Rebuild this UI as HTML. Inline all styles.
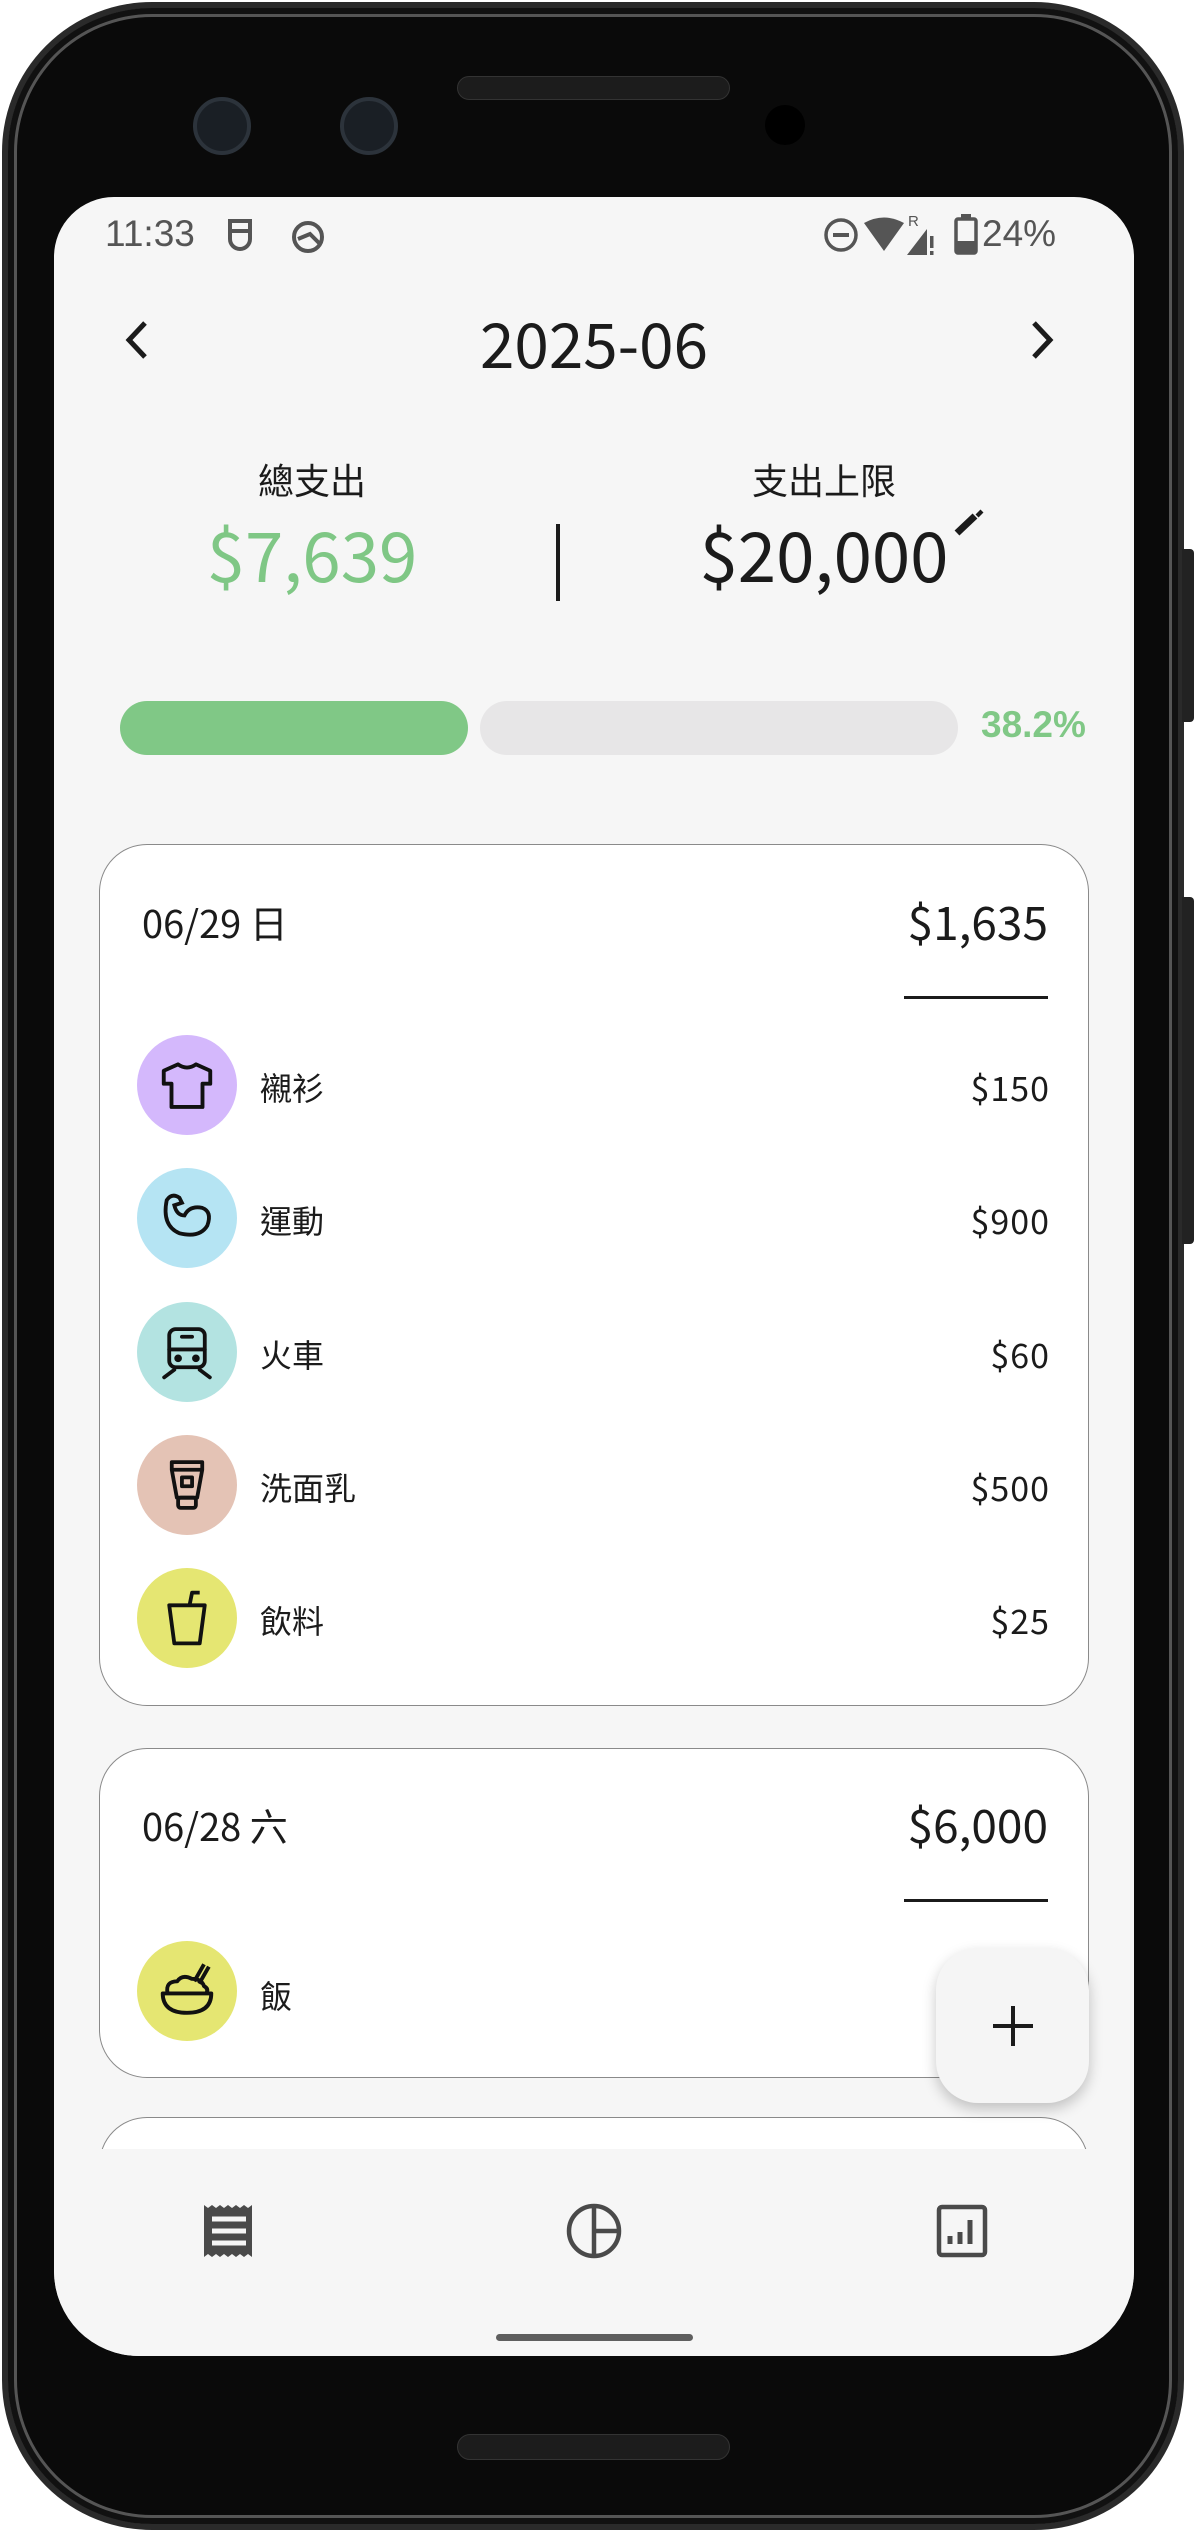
<!DOCTYPE html>
<html><head><meta charset="utf-8"><style>
*{margin:0;padding:0;box-sizing:border-box}
body{width:1194px;height:2532px;background:#fff;position:relative;overflow:hidden;font-family:"Liberation Sans","Noto Sans CJK TC",sans-serif;color:#1b1b1b}
.abs{position:absolute}
.phone{left:2px;top:2px;width:1182px;height:2528px;background:#0a0a0a;border-radius:150px;border:6px solid #2a2a2a;box-shadow:inset 0 0 0 6px #111,inset 0 0 0 9px #555}
.screen{left:54px;top:197px;width:1080px;height:2159px;background:#f6f6f6;border-radius:60px 60px 85px 85px;overflow:hidden}
.sb{font-size:37px;color:#555;top:16px}
.cjk{font-family:"Noto Sans CJK TC",sans-serif}
.card{position:absolute;left:45px;width:990px;background:#fff;border:1.5px solid #8a8a8a;border-radius:48px}
.circ{position:absolute;left:37px;width:100px;height:100px;border-radius:50%;display:flex;align-items:center;justify-content:center}
.lbl{position:absolute;left:160px;font-size:32px;font-family:"Noto Sans CJK TC",sans-serif;line-height:40px}
.amt{position:absolute;right:38px;font-size:34px;font-family:"Noto Sans CJK TC",sans-serif;line-height:40px;letter-spacing:1px}
</style></head><body>
<div class="abs phone"></div>
<div class="abs" style="right:0;top:549px;width:12px;height:173px;background:#222;border-radius:0 4px 4px 0"></div>
<div class="abs" style="right:0;top:897px;width:12px;height:347px;background:#222;border-radius:0 4px 4px 0"></div>
<div class="abs" style="left:457px;top:76px;width:273px;height:24px;border-radius:12px;background:#1c1c1c;border:1px solid #333"></div>
<div class="abs" style="left:193px;top:97px;width:58px;height:58px;border-radius:50%;background:#1a1f25;border:4px solid #2c333b"></div>
<div class="abs" style="left:340px;top:97px;width:58px;height:58px;border-radius:50%;background:#1a1f25;border:4px solid #2c333b"></div>
<div class="abs" style="left:765px;top:105px;width:40px;height:40px;border-radius:50%;background:#000"></div>
<div class="abs" style="left:457px;top:2434px;width:273px;height:26px;border-radius:13px;background:#1c1c1c;border:1px solid #333"></div>

<div class="abs screen">
 <div class="abs sb" style="left:51px">11:33</div>
 <svg class="abs" style="left:168px;top:16px" width="130" height="46" viewBox="0 0 130 46"><g fill="none" stroke="#555" stroke-width="4"><path d="M8 8h20v18a10 10 0 0 1-20 0z M8 18h20"/><circle cx="86" cy="24" r="14"/><path d="M76 26l12-5 10 10"/></g></svg>
 <svg class="abs" style="left:770px;top:14px" width="130" height="48" viewBox="0 0 130 48"><g fill="#555"><circle cx="17" cy="24" r="15" fill="none" stroke="#555" stroke-width="3.5"/><rect x="9" y="22" width="16" height="4"/><path d="M40 12q20-11 40 0l-20 28z"/><text x="84" y="15" font-size="15" font-family="Liberation Sans">R</text><path d="M83 44l20-26v26z"/><rect x="106" y="25" width="3.5" height="12"/><rect x="106" y="40" width="3.5" height="4"/></g></svg>
 <svg class="abs" style="left:900px;top:16px" width="24" height="42" viewBox="0 0 24 42"><rect x="2" y="6" width="20" height="34" rx="2" fill="none" stroke="#555" stroke-width="3.5"/><rect x="7" y="1" width="10" height="5" fill="#555"/><rect x="2" y="28" width="20" height="12" fill="#555"/></svg>
 <div class="abs sb" style="left:928px">24%</div>

 <svg class="abs" style="left:63px;top:118px" width="40" height="50" viewBox="0 0 40 50"><path d="M28 8L12 25l16 17" fill="none" stroke="#1b1b1b" stroke-width="5"/></svg>
 <svg class="abs" style="left:968px;top:118px" width="40" height="50" viewBox="0 0 40 50"><path d="M12 8l16 17-16 17" fill="none" stroke="#1b1b1b" stroke-width="5"/></svg>
 <div class="abs" style="left:0;width:1080px;top:104px;text-align:center;font-size:62px;font-family:'Noto Sans CJK TC',sans-serif;line-height:80px">2025-06</div>

 <div class="abs cjk" style="left:108px;width:300px;top:257px;text-align:center;font-size:36px;line-height:50px">總支出</div>
 <div class="abs cjk" style="left:58px;width:400px;top:310px;text-align:center;font-size:69px;line-height:90px;color:#7fc785">$7,639</div>
 <div class="abs" style="left:502px;top:327px;width:4px;height:77px;background:#1b1b1b"></div>
 <div class="abs cjk" style="left:620px;width:300px;top:257px;text-align:center;font-size:36px;line-height:50px">支出上限</div>
 <div class="abs cjk" style="left:570px;width:400px;top:310px;text-align:center;font-size:69px;line-height:90px">$20,000</div>
 <svg class="abs" style="left:900px;top:311px" width="30" height="30" viewBox="0 0 30 30"><path d="M3 25L21 8" stroke="#1b1b1b" stroke-width="7"/><path d="M24 4l3 3" stroke="#1b1b1b" stroke-width="7"/></svg>

 <div class="abs" style="left:66px;top:504px;width:348px;height:54px;border-radius:27px;background:#80c886"></div>
 <div class="abs" style="left:426px;top:504px;width:478px;height:54px;border-radius:27px;background:#e7e6e7"></div>
 <div class="abs" style="left:927px;top:503px;font-size:37px;font-weight:bold;color:#80c886;line-height:50px">38.2%</div>

 <div class="card" style="top:647px;height:862px">
  <div class="abs cjk" style="left:42px;top:52px;font-size:38px;line-height:50px">06/29 日</div>
  <div class="abs cjk" style="right:40px;top:46px;font-size:46px;line-height:60px">$1,635</div>
  <div class="abs" style="right:40px;top:151px;width:144px;height:3px;background:#1b1b1b"></div>
  <div class="circ" style="top:190px;background:#d4b8fc"><svg width="62" height="62" viewBox="0 0 48 48" fill="none" stroke="#111" stroke-width="3" stroke-linejoin="round"><path d="M17 8q7 5 14 0l11 5v10h-6v18H12V23H6V13z"/></svg></div>
  <div class="lbl" style="top:222px">襯衫</div><div class="amt" style="top:222px">$150</div>
  <div class="circ" style="top:323px;background:#b5e4f3"><svg width="66" height="66" viewBox="0 0 52 52" fill="none" stroke="#111" stroke-width="3" stroke-linecap="round"><path d="M10 12q4-6 10-2l2 4-6 2q2 8 8 8q4-8 14-6q8 3 4 14q-6 10-22 6q-14-6-10-26z"/></svg></div>
  <div class="lbl" style="top:355px">運動</div><div class="amt" style="top:355px">$900</div>
  <div class="circ" style="top:457px;background:#b3e3e1"><svg width="66" height="66" viewBox="0 0 52 52" fill="none" stroke="#111" stroke-width="3" stroke-linecap="round"><rect x="12" y="8" width="28" height="30" rx="5"/><path d="M12 24h28M22 14h8M8 46l8-6M44 46l-8-6"/><circle cx="19" cy="31" r="1.5" fill="#111"/><circle cx="33" cy="31" r="1.5" fill="#111"/></svg></div>
  <div class="lbl" style="top:489px">火車</div><div class="amt" style="top:489px">$60</div>
  <div class="circ" style="top:590px;background:#e4c3b5"><svg width="66" height="66" viewBox="0 0 52 52" fill="none" stroke="#111" stroke-width="3" stroke-linejoin="round"><path d="M14 8h24v6l-4 22H18l-4-22z M14 14h24"/><rect x="19" y="36" width="14" height="8" rx="2"/><rect x="22" y="20" width="8" height="7"/></svg></div>
  <div class="lbl" style="top:622px">洗面乳</div><div class="amt" style="top:622px">$500</div>
  <div class="circ" style="top:723px;background:#e5e672"><svg width="66" height="66" viewBox="0 0 52 52" fill="none" stroke="#111" stroke-width="3" stroke-linejoin="round"><path d="M12 16h28l-4 30H16z M28 16l2-10h6"/></svg></div>
  <div class="lbl" style="top:755px">飲料</div><div class="amt" style="top:755px">$25</div>
 </div>

 <div class="card" style="top:1551px;height:330px">
  <div class="abs cjk" style="left:42px;top:51px;font-size:38px;line-height:50px">06/28 六</div>
  <div class="abs cjk" style="right:40px;top:45px;font-size:46px;line-height:60px">$6,000</div>
  <div class="abs" style="right:40px;top:150px;width:144px;height:3px;background:#1b1b1b"></div>
  <div class="circ" style="top:192px;background:#e5e672"><svg width="68" height="68" viewBox="0 0 56 56" fill="none" stroke="#111" stroke-width="3.2" stroke-linejoin="round"><path d="M8 30h40q0 16-20 16T8 30z M12 30q-2-10 8-10q4-6 12-2q8 0 10 6q4 2 2 6 M34 20l8-14M38 22l8-14"/></svg></div>
  <div class="lbl" style="top:226px">飯</div>
 </div>
 <div class="card" style="top:1920px;height:200px"></div>

 <div class="abs" style="left:0;top:1952px;width:1080px;height:210px;background:#f6f6f6"></div>
 <svg class="abs" style="left:148px;top:2006px" width="54" height="56" viewBox="0 0 54 56"><path d="M2 2l4 3 4-3 4 3 4-3 4 3 4-3 4 3 4-3 4 3 4-3 4 3 4-3V54l-4-3-4 3-4-3-4 3-4-3-4 3-4-3-4 3-4-3-4 3-4-3-4 3z" fill="#4a4a4a"/><path d="M10 16h34M10 28h34M10 40h34" stroke="#f6f6f6" stroke-width="5"/></svg>
 <svg class="abs" style="left:511px;top:2004px" width="58" height="60" viewBox="0 0 58 60"><circle cx="29" cy="30" r="25" fill="none" stroke="#4a4a4a" stroke-width="4.5"/><path d="M29 5v50M29 30h25" stroke="#4a4a4a" stroke-width="4.5"/></svg>
 <svg class="abs" style="left:882px;top:2007px" width="52" height="54" viewBox="0 0 52 54"><rect x="3" y="3" width="46" height="48" rx="3" fill="none" stroke="#4a4a4a" stroke-width="4.5"/><path d="M14 40v-8M24 40v-12M34 40v-24" stroke="#4a4a4a" stroke-width="5"/></svg>
 <div class="abs" style="left:442px;top:2137px;width:197px;height:7px;border-radius:4px;background:#5f5f5f"></div>

 <div class="abs" style="left:882px;top:1751px;width:153px;height:155px;border-radius:42px;background:#f5f5f5;box-shadow:0 6px 14px rgba(0,0,0,0.22)">
  <div class="abs" style="left:57px;top:76px;width:40px;height:4px;background:#1b1b1b"></div>
  <div class="abs" style="left:75px;top:58px;width:4px;height:40px;background:#1b1b1b"></div>
 </div>
</div>
</body></html>
